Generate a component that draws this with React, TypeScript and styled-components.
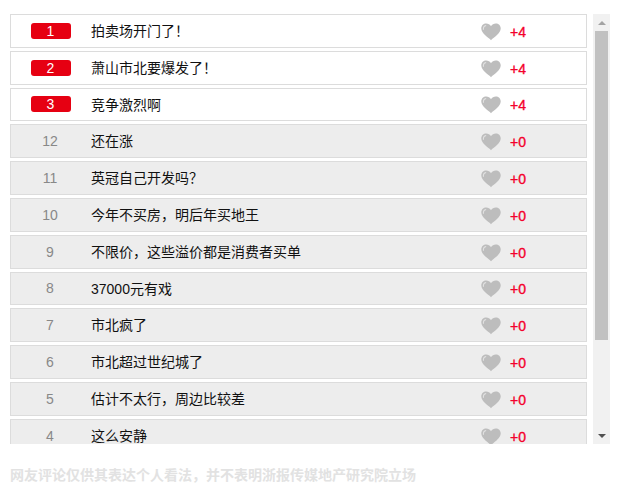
import styled, { createGlobalStyle } from "styled-components";

type Comment = {
    rank: number
    text: string
    votes: number
}

const comments: Comment[] = [
    {rank: 1, text: "拍卖场开门了！", votes: 4},
    {rank: 2, text: "萧山市北要爆发了！", votes: 4},
    {rank: 3, text: "竞争激烈啊", votes: 4},
    {rank: 12, text: "还在涨", votes: 0},
    {rank: 11, text: "英冠自己开发吗？", votes: 0},
    {rank: 10, text: "今年不买房，明后年买地王", votes: 0},
    {rank: 9, text: "不限价，这些溢价都是消费者买单", votes: 0},
    {rank: 8, text: "37000元有戏", votes: 0},
    {rank: 7, text: "市北疯了", votes: 0},
    {rank: 6, text: "市北超过世纪城了", votes: 0},
    {rank: 5, text: "估计不太行，周边比较差", votes: 0},
    {rank: 4, text: "这么安静", votes: 0},
]

function HeartIcon() {
    return (
        <Heart width="20" height="18" viewBox="0 0 21 18">
            <path
                d="M10.5 17.6 C8 15 0.3 10.6 0.3 5.4 C0.3 2.2 2.7 0.2 5.4 0.2 C7.6 0.2 9.4 1.3 10.5 3 C11.6 1.3 13.4 0.2 15.6 0.2 C18.3 0.2 20.7 2.2 20.7 5.4 C20.7 10.6 13 15 10.5 17.6 Z"
                fill="#bdbdbd"
            />
            <path d="M2.6 6.6 C2.2 4.2 3.4 2.6 5.4 2.2" fill="none" stroke="#e2e2e2" strokeWidth="1.1"/>
        </Heart>
    )
}

function CommentRow({rank, text, votes, top}: Comment & { top: boolean }) {
    return (
        <Row $top={top}>
            <RankCell>{top ? <RankBadge>{rank}</RankBadge> : <RankNumber>{rank}</RankNumber>}</RankCell>
            <CommentText>{text}</CommentText>
            <HeartIcon/>
            <Votes>+{votes}</Votes>
        </Row>
    )
}

export default function App() {
    return (
        <Page>
            <GlobalStyle/>
            <ScrollArea>
                <List>
                    {comments.map((c, i) => <CommentRow key={c.rank} {...c} top={i < 3}/>)}
                </List>
                <Scrollbar>
                    <ArrowButton><ArrowUp/></ArrowButton>
                    <Thumb/>
                    <ScrollGap/>
                    <ArrowButton><ArrowDown/></ArrowButton>
                </Scrollbar>
            </ScrollArea>
            <Disclaimer>网友评论仅供其表达个人看法，并不表明浙报传媒地产研究院立场</Disclaimer>
        </Page>
    )
}

const GlobalStyle = createGlobalStyle`
    html, body {
        margin: 0;
        padding: 0;
        background: #fff;
        overflow: hidden;
    }
    body {
        font-family: "Liberation Sans", "Noto Sans CJK SC", sans-serif;
        font-size: 14px;
    }
`

const Page = styled.div`
    width: 625px;
    height: 488px;
    padding: 14px 0 0 10px;
    box-sizing: border-box;
`

const ScrollArea = styled.div`
    display: flex;
    width: 600px;
    height: 430px;
    gap: 6px;
`

const List = styled.div`
    flex: 0 0 577px;
    height: 430px;
    overflow: hidden;
`

const Row = styled.div<{ $top: boolean }>`
    display: flex;
    align-items: center;
    height: 33.8px;
    margin-bottom: 3px;
    box-sizing: border-box;
    border: 1px solid #dcdcdc;
    background: ${p => (p.$top ? "#fff" : "#ededed")};
`

const RankCell = styled.div`
    flex: 0 0 80px;
    display: flex;
    justify-content: center;
`

const RankBadge = styled.span`
    width: 40px;
    height: 16px;
    padding-right: 1px;
    box-sizing: border-box;
    line-height: 16px;
    border-radius: 3px;
    background: #e60012;
    color: #fff;
    text-align: center;
`

const RankNumber = styled.span`
    padding-right: 2px;
    color: #888;
`

const CommentText = styled.div`
    flex: 0 0 390px;
    padding-bottom: 1.6px;
    color: #111;
    white-space: nowrap;
`

const Heart = styled.svg`
    flex: none;
    display: block;
    margin-top: 2px;
`

const Votes = styled.span`
    margin-left: 9px;
    padding-top: 2px;
    color: #f4002c;
    -webkit-text-stroke: 0.35px #f4002c;
`

const Scrollbar = styled.div`
    flex: 0 0 17px;
    display: flex;
    flex-direction: column;
    align-items: center;
    background: #f1f1f1;
`

const ArrowButton = styled.div`
    flex: 0 0 17px;
    width: 100%;
    display: flex;
    align-items: center;
    justify-content: center;
`

const ArrowUp = styled.div`
    width: 0;
    height: 0;
    border-left: 4px solid transparent;
    border-right: 4px solid transparent;
    border-bottom: 4px solid #a3a3a3;
`

const ArrowDown = styled.div`
    width: 0;
    height: 0;
    border-left: 4px solid transparent;
    border-right: 4px solid transparent;
    border-top: 4px solid #505050;
`

const Thumb = styled.div`
    flex: 0 0 309px;
    width: 13px;
    background: #c1c1c1;
`

const ScrollGap = styled.div`
    flex: 1;
`

const Disclaimer = styled.div`
    margin-top: 20px;
    font-weight: bold;
    color: #e2e2e2;
    white-space: nowrap;
`
